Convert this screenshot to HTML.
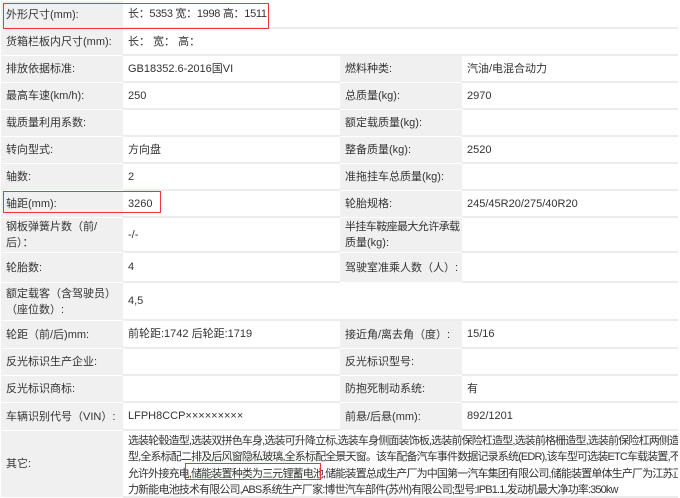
<!DOCTYPE html>
<html><head><meta charset="utf-8"><style>
*{margin:0;padding:0;box-sizing:border-box}
body{width:680px;height:498px;background:#fff;position:relative;overflow:hidden;font-family:"Liberation Sans","Noto Sans CJK SC",sans-serif;font-size:11px;color:#333}
.c{position:absolute;display:flex;align-items:center;line-height:16px;white-space:nowrap;overflow:hidden}
.g{background:#f0f0f0}
.w{background:#fff;border-bottom:2px solid #ececec}
.box{position:absolute;border:1.5px solid #e8383d}
.o{display:block;padding-top:2px;line-height:16.3px;font-size:11px;letter-spacing:-0.85px}
</style></head><body>
<div id="t"></div>
<script>
var rows=[
[1,28,"外形尺寸(mm):","<span style='letter-spacing:-0.3px'>长：5353 宽：1998 高：1511</span>",null,null],
[29,55,"货箱栏板内尺寸(mm):","长：&nbsp;宽：&nbsp;高：",null,null],
[56,82,"排放依据标准:","GB18352.6-2016国VI","燃料种类:","汽油/电混合动力"],
[83,109,"最高车速(km/h):","250","总质量(kg):","2970"],
[110,136,"载质量利用系数:","","额定载质量(kg):",""],
[137,163,"转向型式:","方向盘","整备质量(kg):","2520"],
[164,190,"轴数:","2","准拖挂车总质量(kg):",""],
[191,217,"轴距(mm):","3260","轮胎规格:","245/45R20/275/40R20"],
[218,252,"钢板弹簧片数（前/<br>后）：","-/-","<span style='letter-spacing:-0.6px'>半挂车鞍座最大允许承载</span><br>质量(kg):",""],
[253,282,"轮胎数:","4","驾驶室准乘人数（人）:",""],
[283,320,"额定载客（含驾驶员）<br>（座位数）:","4,5","",""],
[321,348,"轮距（前/后)mm:","前轮距:1742 后轮距:1719","接近角/离去角（度）:","15/16"],
[349,375,"反光标识生产企业:","","反光标识型号:",""],
[376,402,"反光标识商标:","","防抱死制动系统:","有"],
[403,430,"车辆识别代号（VIN）:","LFPH8CCP×××××××××","前悬/后悬(mm):","892/1201"]
];
var h="";
rows.forEach(function(r){
 var y=r[0],hh=r[1]-r[0]+1;
 h+='<div class="c g" style="left:1px;top:'+y+'px;width:122px;height:'+(hh-1)+'px;padding-left:5px"><span>'+r[2]+'</span></div>';
 if(r[4]===null||r[4]===""){
  h+='<div class="c w" style="left:123px;top:'+y+'px;width:555px;height:'+hh+'px;padding-left:5px">'+r[3]+'</div>';
 }else{
  h+='<div class="c w" style="left:123px;top:'+y+'px;width:217px;height:'+hh+'px;padding-left:5px">'+r[3]+'</div>';
  h+='<div class="c g" style="left:340px;top:'+y+'px;width:122px;height:'+(hh-1)+'px;padding-left:5px"><span>'+r[4]+'</span></div>';
  h+='<div class="c w" style="left:462px;top:'+y+'px;width:216px;height:'+hh+'px;padding-left:5px">'+r[5]+'</div>';
 }
});
h+='<div class="c g" style="left:1px;top:431px;width:122px;height:66px;padding-left:5px">其它:</div>';
h+='<div class="c w o" style="left:123px;top:431px;width:555px;height:67px;padding-left:5px">选装轮毂造型,选装双拼色车身,选装可升降立标,选装车身侧面装饰板,选装前保险杠造型,选装前格栅造型,选装前保险杠两侧造<br>型,全系标配二排及后风窗隐私玻璃,全系标配全景天窗。该车配备汽车事件数据记录系统(EDR),该车型可选装ETC车载装置,不<br>允许外接充电,储能装置种类为三元锂蓄电池,储能装置总成生产厂为中国第一汽车集团有限公司,储能装置单体生产厂为江苏正<br>力新能电池技术有限公司,ABS系统生产厂家:博世汽车部件(苏州)有限公司;型号:IPB1.1,发动机最大净功率:350kw</div>';
h+='<div class="box" style="left:3px;top:3px;width:266px;height:26px"></div>';
h+='<div class="box" style="left:3px;top:191px;width:158px;height:22px"></div>';
h+='<div class="box" style="left:185px;top:463px;width:136px;height:17px"></div>';
document.getElementById("t").innerHTML=h;
</script>
</body></html>
